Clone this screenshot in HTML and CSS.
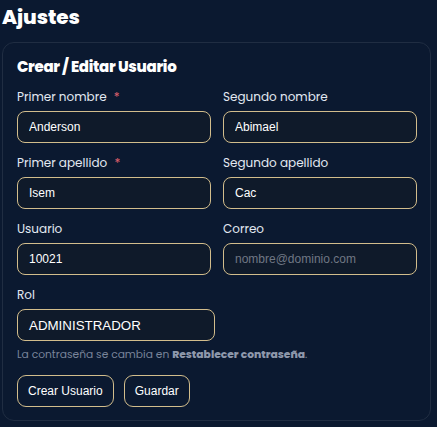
FILE: index.html
```html
<!DOCTYPE html>
<html lang="es">
<head>
<meta charset="utf-8">
<link rel="stylesheet" href="styles.css">
</head>
<body>
<div class="page">
  <h1 class="title">Ajustes</h1>
  <section class="card">
    <h2 class="card-title">Crear / Editar Usuario</h2>
    <div class="grid">
      <div class="field">
        <label class="label">Primer nombre <span class="req">*</span></label>
        <input class="input" value="Anderson">
      </div>
      <div class="field">
        <label class="label">Segundo nombre</label>
        <input class="input" value="Abimael">
      </div>
      <div class="field">
        <label class="label">Primer apellido <span class="req">*</span></label>
        <input class="input" value="Isem">
      </div>
      <div class="field">
        <label class="label">Segundo apellido</label>
        <input class="input" value="Cac">
      </div>
      <div class="field">
        <label class="label">Usuario</label>
        <input class="input" value="10021">
      </div>
      <div class="field">
        <label class="label">Correo</label>
        <input class="input" placeholder="nombre@dominio.com">
      </div>
      <div class="field">
        <label class="label">Rol</label>
        <div class="select">ADMINISTRADOR</div>
      </div>
    </div>
    <p class="hint">La contraseña se cambia en <b>Restablecer contraseña</b>.</p>
    <div class="actions">
      <button class="btn">Crear Usuario</button>
      <button class="btn">Guardar</button>
    </div>
  </section>
</div>
</body>
</html>
```
FILE: styles.css
```css
* { box-sizing: border-box; }
html, body { margin: 0; background: #0b1930; }
body { font-family: "Poppins", "Open Sans", sans-serif; color: #e6ecf4; }
.page { padding: 0 6px 0 2px; }
.title { margin: 0; font-size: 20px; font-weight: 800; line-height: 34px; color: #ffffff; letter-spacing: -0.1px; }
.card {
  margin-top: 8px;
  border: 1px solid #202d42;
  border-radius: 12px;
  padding: 14px 14px 13px 14px;
  background: #0b1930;
}
.card-title { margin: 0 0 10px; font-size: 15px; font-weight: 800; line-height: 20px; color: #ffffff; letter-spacing: -0.3px; }
.grid { display: grid; grid-template-columns: 194px 194px; column-gap: 12px; row-gap: 10px; }
.field { display: flex; flex-direction: column; gap: 5px; }
.label { font-size: 12px; line-height: 19px; color: #e3e9f2; }
.req { color: #e0606e; margin-left: 4px; }
.input, .select {
  height: 32px;
  border: 1px solid #d2bd8c;
  border-radius: 8px;
  background: #0f1a2a;
  color: #ffffff;
  font-family: "Liberation Sans", Arial, sans-serif;
  font-size: 12px;
  padding: 0 11px;
  outline: none;
}
.input::placeholder { color: #6f7784; }
.select { width: 198px; font-size: 13.33px; display: flex; align-items: center; }
.hint { margin: 6px 0 12px; font-size: 10.7px; line-height: 16px; color: #79849a; }
.hint b { font-weight: 800; color: #8e98ab; }
.actions { display: flex; gap: 10px; }
.btn {
  height: 32px;
  padding: 0 10px;
  border: 1px solid #d2bd8c;
  border-radius: 9px;
  background: #0b1930;
  color: #ffffff;
  font-family: "Liberation Sans", Arial, sans-serif;
  font-size: 12px;
}
```
